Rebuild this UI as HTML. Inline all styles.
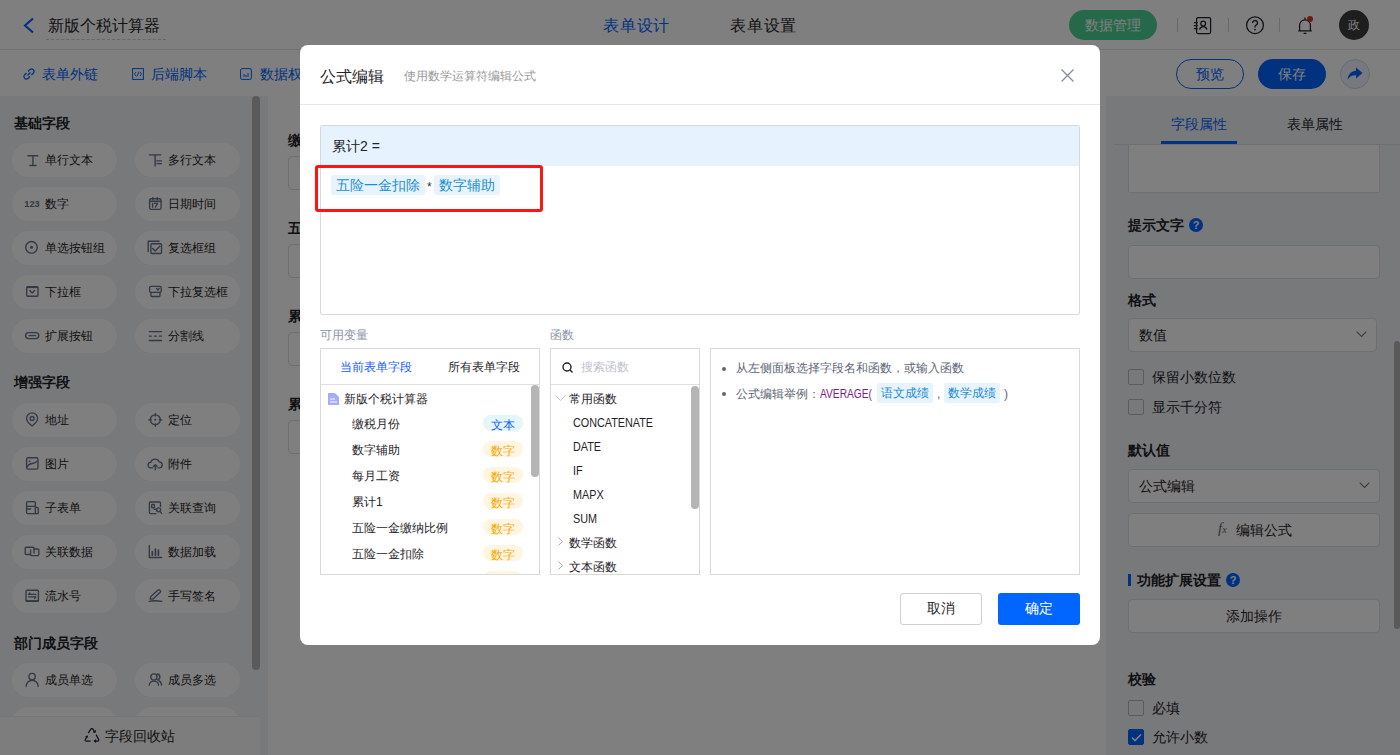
<!DOCTYPE html>
<html><head><meta charset="utf-8">
<style>
*{box-sizing:border-box;margin:0;padding:0}
html,body{width:1400px;height:755px;overflow:hidden;background:#fff;font-family:"Liberation Sans",sans-serif;color:#1f2329}
.a{position:absolute}
.t{position:absolute;white-space:nowrap;line-height:1}
/* header */
#hdr{left:0;top:0;width:1400px;height:50px;background:#fff;border-bottom:1px solid #e6e8eb}
#bar2{left:0;top:50px;width:1400px;height:46px;background:#fff;box-shadow:0 2px 4px rgba(0,0,0,.06)}
#side{left:0;top:96px;width:268px;height:659px;background:#f1f3f7}
#canvas{left:268px;top:96px;width:838px;height:659px;background:#fff}
#rp{left:1106px;top:96px;width:294px;height:659px;background:#f0f2f7}
.pill{position:absolute;width:105px;height:34px;border-radius:17px;background:#fff}
.pill .ic{position:absolute;left:12px;top:9px;width:16px;height:16px;overflow:visible}
.pill .tx{position:absolute;left:33px;top:0;line-height:34px;font-size:12px;color:#1f2329;white-space:nowrap}
.sh{position:absolute;left:14px;font-size:14px;font-weight:bold;color:#1f2329;line-height:1}
.lbl{position:absolute;font-size:14px;font-weight:bold;color:#1f2329;line-height:1}
.inp{position:absolute;border:1px solid #dcdfe6;border-radius:4px;background:#fff}
.cb{position:absolute;width:16px;height:16px;border:1px solid #b4b8c0;border-radius:2px;background:transparent}
#mask{left:0;top:0;width:1400px;height:755px;background:rgba(0,0,0,.5)}
/* modal */
#modal{left:300px;top:45px;width:800px;height:600px;background:#fff;border-radius:8px;overflow:hidden}
.mb{position:absolute;border:1px solid #d9d9d9;background:#fff}
.tag{position:absolute;height:20px;border-radius:2px;background:#e8f4fd;color:#1890d0;font-size:14px;line-height:20px;white-space:nowrap}
.badge{position:absolute;left:162px;width:40px;height:16px;border-radius:8px;font-size:12px;line-height:20px;text-align:center}
.vrow{position:absolute;left:31px;font-size:12px;color:#1f2329;line-height:1;white-space:nowrap}
.lat{transform:scaleX(.9);transform-origin:0 0;color:#333}
.frow{position:absolute;left:22px;font-size:12px;color:#1f2329;line-height:1;white-space:nowrap}
</style></head>
<body>
<div id="bg">
  <div id="hdr" class="a">
    <svg class="a" style="left:22px;top:17px" width="13" height="17" viewBox="0 0 13 17"><path d="M11 1.5L3 8.5L11 15.5" stroke="#0064ff" stroke-width="2.1" fill="none"/></svg>
    <div class="t" style="left:48px;top:18px;font-size:16px;color:#1f2329">新版个税计算器</div>
    <div class="a" style="left:46px;top:39px;width:120px;height:0;border-top:1px dashed #c8ccd2"></div>
    <div class="t" style="left:603px;top:18px;font-size:16px;letter-spacing:.8px;color:#0064ff">表单设计</div>
    <div class="t" style="left:730px;top:18px;font-size:16px;letter-spacing:.8px;color:#1f2329">表单设置</div>
    <div class="a" style="left:1069px;top:10px;width:88px;height:30px;border-radius:15px;background:#4cd294;color:#fff;font-size:14px;line-height:30px;text-align:center">数据管理</div>
    <div class="a" style="left:1177px;top:18px;width:1px;height:14px;background:#d0d3d8"></div>
    <svg class="a" style="left:1193px;top:16px" width="19" height="19" viewBox="0 0 19 19"><rect x="3.6" y="1.6" width="14" height="16" rx="1.5" stroke="#1f2329" stroke-width="1.25" fill="none"/><circle cx="10.2" cy="7.6" r="2.4" stroke="#1f2329" stroke-width="1.25" fill="none"/><path d="M6.6 13.6A3.7 3.7 0 0 1 13.9 13.6M0.9 6.5H4.6M0.9 9.5H4.6M0.9 12.5H4.6" stroke="#1f2329" stroke-width="1.25" fill="none"/></svg>
    <div class="a" style="left:1228px;top:18px;width:1px;height:14px;background:#d0d3d8"></div>
    <svg class="a" style="left:1245px;top:15px" width="20" height="20" viewBox="0 0 20 20"><circle cx="10" cy="10.2" r="8.4" stroke="#1f2329" stroke-width="1.25" fill="none"/><path d="M7.6 8A2.45 2.45 0 1 1 10.8 10.3C10.2 10.6 10 11 10 11.8V12.6" stroke="#1f2329" stroke-width="1.3" fill="none"/><circle cx="10" cy="14.6" r="0.85" fill="#1f2329"/></svg>
    <div class="a" style="left:1279px;top:18px;width:1px;height:14px;background:#d0d3d8"></div>
    <svg class="a" style="left:1296px;top:15px" width="20" height="20" viewBox="0 0 20 20"><path d="M3.6 15.8V10.2A5.4 5.4 0 0 1 14.4 10.2V15.8M2.2 15.9H15.8M7.6 18.4H10.4M9 2.4V4.6" stroke="#1f2329" stroke-width="1.25" fill="none"/><circle cx="14" cy="4" r="3" fill="#e0302a"/></svg>
    <div class="a" style="left:1339px;top:10px;width:30px;height:30px;border-radius:15px;background:#3c3c3c;color:#fff;font-size:12px;line-height:30px;text-align:center">政</div>
  </div>
  <div id="bar2" class="a">
    <svg class="a" style="left:23px;top:18px" width="12" height="12" viewBox="0 0 12 12"><path d="M5 3.5L7 1.5A2.5 2.5 0 0 1 10.5 5L8.5 7M7 8.5L5 10.5A2.5 2.5 0 0 1 1.5 7L3.5 5M4.5 7.5L7.5 4.5" stroke="#0064ff" stroke-width="1.2" fill="none"/></svg>
    <div class="t" style="left:42px;top:17px;font-size:14px;color:#0064ff">表单外链</div>
    <svg class="a" style="left:132px;top:18px" width="12" height="12" viewBox="0 0 12 12"><rect x="0.6" y="0.6" width="10.8" height="10.8" stroke="#0064ff" stroke-width="1" fill="none"/><path d="M4 4L2.5 6L4 8M8 4L9.5 6L8 8M7 3.5L5 8.5" stroke="#0064ff" stroke-width="0.9" fill="none"/></svg>
    <div class="t" style="left:151px;top:17px;font-size:14px;color:#0064ff">后端脚本</div>
    <svg class="a" style="left:240px;top:18px" width="12" height="12" viewBox="0 0 12 12"><rect x="0.6" y="0.6" width="10.8" height="10.8" rx="1.5" stroke="#0064ff" stroke-width="1" fill="none"/><path d="M4 6V9M6 7V9M8 5V9" stroke="#0064ff" stroke-width="1"/></svg>
    <div class="t" style="left:260px;top:17px;font-size:14px;color:#0064ff">数据权限</div>
    <div class="a" style="left:1176px;top:9px;width:68px;height:30px;border-radius:15px;border:1px solid #0064ff;color:#0064ff;font-size:14px;line-height:28px;text-align:center">预览</div>
    <div class="a" style="left:1258px;top:9px;width:68px;height:30px;border-radius:15px;background:#0064ff;color:#fff;font-size:14px;line-height:30px;text-align:center">保存</div>
    <div class="a" style="left:1340px;top:9px;width:30px;height:30px;border-radius:15px;background:#eef2fc;border:1px solid #c9d6f2"></div>
    <svg class="a" style="left:1347px;top:17px" width="16" height="14" viewBox="0 0 16 14"><path d="M9 0.5L15.5 6L9 11.5V8.3C5 8.3 2.5 9.5 0.5 13C1 8 3.5 4.2 9 3.8Z" fill="#0064ff"/></svg>
  </div>
  <div id="side" class="a"></div>
  <div id="canvas" class="a"></div>
  <div id="rp" class="a"></div>
  <div class="sh" style="top:116px">基础字段</div><div class="pill" style="left:12px;top:143px"><svg class="ic" width="16" height="16" viewBox="0 0 16 16"><path d="M3.9 3.7H13.8M5.9 13.5H12.1M8.9 3.7V13.5" stroke="#66728a" stroke-width="1.35" fill="none" stroke-linecap="round" stroke-linejoin="round"/></svg><div class="tx">单行文本</div></div><div class="pill" style="left:135px;top:143px"><svg class="ic" width="16" height="16" viewBox="0 0 16 16"><path d="M2.3 2.8H13.7M8.1 2.8V14M9.8 8.9H14.5M9.8 11.6H14.5" stroke="#66728a" stroke-width="1.35" fill="none" stroke-linecap="round" stroke-linejoin="round"/></svg><div class="tx">多行文本</div></div><div class="pill" style="left:12px;top:187px"><svg class="ic" width="16" height="16" viewBox="0 0 16 16"><text x="0.3" y="10.9" font-size="9.2" font-weight="bold" fill="#66728a" font-family="Liberation Sans">123</text></svg><div class="tx">数字</div></div><div class="pill" style="left:135px;top:187px"><svg class="ic" width="16" height="16" viewBox="0 0 16 16"><rect x="2.6" y="2.7" width="11.5" height="10.6" rx="1.6" stroke="#66728a" stroke-width="1.35" fill="none" stroke-linecap="round" stroke-linejoin="round"/><path d="M2.6 5.3H14.1" stroke="#66728a" stroke-width="1.6"/><path d="M5.8 1.6V3.8M10.3 1.6V3.8M5.6 7.3V11.2M7.4 7.3H10.6L8.4 11.2" stroke="#66728a" stroke-width="1.35" fill="none" stroke-linecap="round" stroke-linejoin="round"/></svg><div class="tx">日期时间</div></div><div class="pill" style="left:12px;top:231px"><svg class="ic" width="16" height="16" viewBox="0 0 16 16"><circle cx="7.5" cy="7.3" r="5.8" stroke="#66728a" stroke-width="1.35" fill="none" stroke-linecap="round" stroke-linejoin="round"/><circle cx="7.5" cy="7.3" r="1.5" fill="#66728a"/></svg><div class="tx">单选按钮组</div></div><div class="pill" style="left:135px;top:231px"><svg class="ic" width="16" height="16" viewBox="0 0 16 16"><path d="M1.2 11.6V1.2H12.1" stroke="#66728a" stroke-width="1.35" fill="none" stroke-linecap="round" stroke-linejoin="round"/><rect x="3.9" y="3.7" width="10.6" height="9.8" rx="1" stroke="#66728a" stroke-width="1.35" fill="none" stroke-linecap="round" stroke-linejoin="round"/><path d="M5.6 8.4L8.2 11L12.8 6.2" stroke="#66728a" stroke-width="1.35" fill="none" stroke-linecap="round" stroke-linejoin="round"/></svg><div class="tx">复选框组</div></div><div class="pill" style="left:12px;top:275px"><svg class="ic" width="16" height="16" viewBox="0 0 16 16"><rect x="2.7" y="2.7" width="11.3" height="9.5" rx="1" stroke="#66728a" stroke-width="1.35" fill="none" stroke-linecap="round" stroke-linejoin="round"/><path d="M2.7 3.2H14" stroke="#66728a" stroke-width="1.8"/><path d="M5.8 6.5L8.2 9L10.6 6.5" stroke="#66728a" stroke-width="1.35" fill="none" stroke-linecap="round" stroke-linejoin="round"/></svg><div class="tx">下拉框</div></div><div class="pill" style="left:135px;top:275px"><svg class="ic" width="16" height="16" viewBox="0 0 16 16"><rect x="2.6" y="2.4" width="11.6" height="5.9" rx="1.4" stroke="#66728a" stroke-width="1.35" fill="none" stroke-linecap="round" stroke-linejoin="round"/><path d="M3.9 8.3V11.5A1 1 0 0 0 4.9 12.5H12A1 1 0 0 0 13 11.5V8.3" stroke="#66728a" stroke-width="1.35" fill="none" stroke-linecap="round" stroke-linejoin="round"/><path d="M9.6 4.4L10.9 6L12.2 4.4" stroke="#66728a" stroke-width="1.35" fill="none" stroke-linecap="round" stroke-linejoin="round"/></svg><div class="tx">下拉复选框</div></div><div class="pill" style="left:12px;top:319px"><svg class="ic" width="16" height="16" viewBox="0 0 16 16"><rect x="1.6" y="4.6" width="13.2" height="6" rx="3" stroke="#66728a" stroke-width="1.35" fill="none" stroke-linecap="round" stroke-linejoin="round"/><path d="M5 7.6H11.6" stroke="#66728a" stroke-width="1.35" fill="none" stroke-linecap="round" stroke-linejoin="round"/></svg><div class="tx">扩展按钮</div></div><div class="pill" style="left:135px;top:319px"><svg class="ic" width="16" height="16" viewBox="0 0 16 16"><path d="M2.3 3.6H14.5M2.3 12.5H14.5" stroke="#66728a" stroke-width="1.35" fill="none" stroke-linecap="round" stroke-linejoin="round"/><path d="M2.3 8.1H4.4M7.3 8.1H9.4M12.3 8.1H14.5" stroke="#66728a" stroke-width="1.35" fill="none" stroke-linecap="round" stroke-linejoin="round"/></svg><div class="tx">分割线</div></div><div class="sh" style="top:375px">增强字段</div><div class="pill" style="left:12px;top:403px"><svg class="ic" width="16" height="16" viewBox="0 0 16 16"><path d="M8.1 14.1C8.1 14.1 2.6 9.6 2.6 6.4A5.5 5.5 0 0 1 13.6 6.4C13.6 9.6 8.1 14.1 8.1 14.1Z" stroke="#66728a" stroke-width="1.35" fill="none" stroke-linecap="round" stroke-linejoin="round"/><circle cx="8.1" cy="6.4" r="1.9" stroke="#66728a" stroke-width="1.35" fill="none" stroke-linecap="round" stroke-linejoin="round"/></svg><div class="tx">地址</div></div><div class="pill" style="left:135px;top:403px"><svg class="ic" width="16" height="16" viewBox="0 0 16 16"><circle cx="8.3" cy="7.8" r="5" stroke="#66728a" stroke-width="1.35" fill="none" stroke-linecap="round" stroke-linejoin="round"/><circle cx="8.3" cy="7.8" r="1" fill="#66728a"/><path d="M8.3 1.3V4M8.3 11.6V14.3M1.8 7.8H4.5M12.1 7.8H14.8" stroke="#66728a" stroke-width="1.35" fill="none" stroke-linecap="round" stroke-linejoin="round"/></svg><div class="tx">定位</div></div><div class="pill" style="left:12px;top:447px"><svg class="ic" width="16" height="16" viewBox="0 0 16 16"><rect x="2.6" y="1.7" width="11.4" height="11.4" rx="1.6" stroke="#66728a" stroke-width="1.35" fill="none" stroke-linecap="round" stroke-linejoin="round"/><circle cx="5.6" cy="5.2" r="0.9" fill="#66728a"/><path d="M3.4 10.6C4.6 7.8 6 7.6 8.3 7.5C10.4 7.4 11.6 6.6 13 5.3" stroke="#66728a" stroke-width="1.35" fill="none" stroke-linecap="round" stroke-linejoin="round"/></svg><div class="tx">图片</div></div><div class="pill" style="left:135px;top:447px"><svg class="ic" width="16" height="16" viewBox="0 0 16 16"><path d="M5.6 11.9H4A2.8 2.8 0 0 1 3.7 6.3A4.6 4.6 0 0 1 12.3 5.9A3 3 0 0 1 12.1 11.9H11" stroke="#66728a" stroke-width="1.35" fill="none" stroke-linecap="round" stroke-linejoin="round"/><path d="M8.3 13.7V8.8M6.5 10.5L8.3 8.6L10.1 10.5" stroke="#66728a" stroke-width="1.35" fill="none" stroke-linecap="round" stroke-linejoin="round"/></svg><div class="tx">附件</div></div><div class="pill" style="left:12px;top:491px"><svg class="ic" width="16" height="16" viewBox="0 0 16 16"><path d="M11.3 6.6V2.6A1 1 0 0 0 10.3 1.6H3.6A1 1 0 0 0 2.6 2.6V12.6A1 1 0 0 0 3.6 13.6H14.2V8.3A1 1 0 0 0 13.2 7.3H11.3V13.6M2.6 6.3H11.3M3.8 9H6.6" stroke="#66728a" stroke-width="1.35" fill="none" stroke-linecap="round" stroke-linejoin="round"/></svg><div class="tx">子表单</div></div><div class="pill" style="left:135px;top:491px"><svg class="ic" width="16" height="16" viewBox="0 0 16 16"><path d="M13.5 6.6V3A1 1 0 0 0 12.5 2H3.4A1 1 0 0 0 2.4 3V12.6A1 1 0 0 0 3.4 13.6H9" stroke="#66728a" stroke-width="1.35" fill="none" stroke-linecap="round" stroke-linejoin="round"/><rect x="4.6" y="4.5" width="2.8" height="3.2" rx="0.8" stroke="#66728a" stroke-width="1.35" fill="none" stroke-linecap="round" stroke-linejoin="round"/><circle cx="11.6" cy="9.8" r="2" stroke="#66728a" stroke-width="1.35" fill="none" stroke-linecap="round" stroke-linejoin="round"/><path d="M7.4 9.2H9.6M13 11.3L14.6 13.3" stroke="#66728a" stroke-width="1.35" fill="none" stroke-linecap="round" stroke-linejoin="round"/></svg><div class="tx">关联查询</div></div><div class="pill" style="left:12px;top:535px"><svg class="ic" width="16" height="16" viewBox="0 0 16 16"><path d="M6.3 10.5H2.2A1 1 0 0 1 1.2 9.5V4.2A1 1 0 0 1 2.2 3.2H9A1 1 0 0 1 10 4.2V9" stroke="#66728a" stroke-width="1.35" fill="none" stroke-linecap="round" stroke-linejoin="round"/><path d="M6.6 5.9V10.6A1 1 0 0 0 7.6 11.6H13.8A1 1 0 0 0 14.8 10.6V6A1 1 0 0 0 13.8 5H10" stroke="#66728a" stroke-width="1.35" fill="none" stroke-linecap="round" stroke-linejoin="round"/></svg><div class="tx">关联数据</div></div><div class="pill" style="left:135px;top:535px"><svg class="ic" width="16" height="16" viewBox="0 0 16 16"><path d="M2.3 1.5V13.5H14.7" stroke="#66728a" stroke-width="1.35" fill="none" stroke-linecap="round" stroke-linejoin="round"/><path d="M5.3 7.6V11.2M8.4 5.2V11.2M11.4 6.1V11.2" stroke="#66728a" stroke-width="1.7" stroke-linecap="round"/></svg><div class="tx">数据加载</div></div><div class="pill" style="left:12px;top:579px"><svg class="ic" width="16" height="16" viewBox="0 0 16 16"><rect x="2" y="2.2" width="12.4" height="11.2" rx="1" stroke="#66728a" stroke-width="1.35" fill="none" stroke-linecap="round" stroke-linejoin="round"/><path d="M2 13H14.4" stroke="#66728a" stroke-width="1.8"/><path d="M4.6 6.4H11.8M5.8 5L4.6 6.4M4.6 8.9H11.8M10.6 10.3L11.8 8.9" stroke="#66728a" stroke-width="1.35" fill="none" stroke-linecap="round" stroke-linejoin="round"/></svg><div class="tx">流水号</div></div><div class="pill" style="left:135px;top:579px"><svg class="ic" width="16" height="16" viewBox="0 0 16 16"><path d="M3.2 11.2L3.6 8.8L11 1.9A1 1 0 0 1 12.5 2L13.3 2.8A1 1 0 0 1 13.3 4.3L6 11.1Z" stroke="#66728a" stroke-width="1.35" fill="none" stroke-linecap="round" stroke-linejoin="round"/><path d="M2.2 13.3C5 12.7 9.5 12.6 14.8 13.3" stroke="#66728a" stroke-width="1.35" fill="none" stroke-linecap="round" stroke-linejoin="round"/></svg><div class="tx">手写签名</div></div><div class="sh" style="top:636px">部门成员字段</div><div class="pill" style="left:12px;top:663px"><svg class="ic" width="16" height="16" viewBox="0 0 16 16"><circle cx="8.1" cy="4.6" r="3.2" stroke="#66728a" stroke-width="1.35" fill="none" stroke-linecap="round" stroke-linejoin="round"/><path d="M2.2 14.2A5.95 5.95 0 0 1 14.1 14.2" stroke="#66728a" stroke-width="1.35" fill="none" stroke-linecap="round" stroke-linejoin="round"/></svg><div class="tx">成员单选</div></div><div class="pill" style="left:135px;top:663px"><svg class="ic" width="16" height="16" viewBox="0 0 16 16"><circle cx="6.9" cy="5" r="3.1" stroke="#66728a" stroke-width="1.35" fill="none" stroke-linecap="round" stroke-linejoin="round"/><path d="M2.2 13A4.8 4.8 0 0 1 11.6 13M10.2 2A3 3 0 0 1 10.6 7.9M11.6 8.6A4.7 4.7 0 0 1 14.5 13" stroke="#66728a" stroke-width="1.35" fill="none" stroke-linecap="round" stroke-linejoin="round"/></svg><div class="tx">成员多选</div></div><div class="pill" style="left:12px;top:707px"><svg class="ic" width="16" height="16" viewBox="0 0 16 16"><circle cx="8.1" cy="4.6" r="3.2" stroke="#66728a" stroke-width="1.35" fill="none" stroke-linecap="round" stroke-linejoin="round"/><path d="M2.2 14.2A5.95 5.95 0 0 1 14.1 14.2" stroke="#66728a" stroke-width="1.35" fill="none" stroke-linecap="round" stroke-linejoin="round"/></svg><div class="tx">成员单选</div></div><div class="pill" style="left:135px;top:707px"><svg class="ic" width="16" height="16" viewBox="0 0 16 16"><circle cx="6.9" cy="5" r="3.1" stroke="#66728a" stroke-width="1.35" fill="none" stroke-linecap="round" stroke-linejoin="round"/><path d="M2.2 13A4.8 4.8 0 0 1 11.6 13M10.2 2A3 3 0 0 1 10.6 7.9M11.6 8.6A4.7 4.7 0 0 1 14.5 13" stroke="#66728a" stroke-width="1.35" fill="none" stroke-linecap="round" stroke-linejoin="round"/></svg><div class="tx">成员多选</div></div><div class="a" style="left:252px;top:96px;width:8px;height:574px;border-radius:4px;background:#b4b4b4"></div><div class="a" style="left:0;top:716px;width:260px;height:39px;background:#fafafb;border-top:1px solid #ebedf0"></div><svg class="a" style="left:84px;top:728px" width="16" height="15" viewBox="0 0 16 15"><path d="M4.2 5.2L7 0.9A1 1 0 0 1 8.7 0.9L10.4 3.6" stroke="#1f2329" stroke-width="1.2" fill="none"/><path d="M9.2 3.9L11 4.2L11.6 2.3" stroke="#1f2329" stroke-width="1.2" fill="none"/><path d="M12.1 6.6L14.7 11.6A1 1 0 0 1 13.8 13.1H10.6M11.9 11.8L10.4 13.1L11.9 14.4" stroke="#1f2329" stroke-width="1.2" fill="none"/><path d="M6.6 13.1H2.2A1 1 0 0 1 1.3 11.6L3 8.2M1.6 8.9L3 8L3.8 9.6" stroke="#1f2329" stroke-width="1.2" fill="none"/></svg><div class="t" style="left:105px;top:729px;font-size:14px;color:#1f2329">字段回收站</div>
  <div class="lbl" style="left:288px;top:133px">缴税月份</div><div class="inp" style="left:288px;top:156px;width:600px;height:34px"></div><div class="lbl" style="left:288px;top:221px">五险一金缴纳比例</div><div class="inp" style="left:288px;top:244px;width:600px;height:34px"></div><div class="lbl" style="left:288px;top:309px">累计1</div><div class="inp" style="left:288px;top:332px;width:600px;height:34px"></div><div class="lbl" style="left:288px;top:397px">累计2</div><div class="inp" style="left:288px;top:420px;width:600px;height:34px"></div>
  <div class="t" style="left:1171px;top:117px;font-size:14px;color:#0064ff">字段属性</div><div class="t" style="left:1287px;top:117px;font-size:14px;color:#1f2329">表单属性</div><div class="a" style="left:1114px;top:144px;width:286px;height:1px;background:#dcdfe6"></div><div class="a" style="left:1161px;top:141px;width:76px;height:3px;background:#0064ff"></div><div class="inp" style="left:1128px;top:121px;width:252px;height:72px;border-radius:2px;clip-path:inset(24px -2px -2px -2px)"></div><div class="lbl" style="left:1128px;top:218px">提示文字</div><div class="a" style="left:1189px;top:218px;width:14px;height:14px;border-radius:7px;background:#0064ff;color:#fff;font-size:11px;font-weight:bold;line-height:14px;text-align:center">?</div><div class="inp" style="left:1128px;top:245px;width:252px;height:34px"></div><div class="lbl" style="left:1128px;top:293px">格式</div><div class="inp" style="left:1128px;top:318px;width:249px;height:34px"></div><div class="t" style="left:1139px;top:328px;font-size:14px;color:#1f2329">数值</div><svg class="a" style="left:1356px;top:331px" width="11" height="7" viewBox="0 0 11 7"><path d="M0.7 0.7L5.5 5.5L10.3 0.7" stroke="#737a86" stroke-width="1.15" fill="none"/></svg><div class="cb" style="left:1128px;top:369px"></div><div class="t" style="left:1152px;top:370px;font-size:14px;color:#1f2329">保留小数位数</div><div class="cb" style="left:1128px;top:399px"></div><div class="t" style="left:1152px;top:400px;font-size:14px;color:#1f2329">显示千分符</div><div class="lbl" style="left:1128px;top:443px">默认值</div><div class="inp" style="left:1128px;top:469px;width:252px;height:34px"></div><div class="t" style="left:1139px;top:479px;font-size:14px;color:#1f2329">公式编辑</div><svg class="a" style="left:1359px;top:482px" width="11" height="7" viewBox="0 0 11 7"><path d="M0.7 0.7L5.5 5.5L10.3 0.7" stroke="#737a86" stroke-width="1.15" fill="none"/></svg><div class="inp" style="left:1128px;top:513px;width:252px;height:34px"></div><div class="t" style="left:1218px;top:521px;font-size:15px;font-style:italic;font-family:'Liberation Serif',serif;color:#5e6675">f<span style="font-size:10px">x</span></div><div class="t" style="left:1236px;top:523px;font-size:14px;color:#1f2329">编辑公式</div><div class="a" style="left:1128px;top:574px;width:3px;height:12px;background:#0064ff"></div><div class="lbl" style="left:1137px;top:573px">功能扩展设置</div><div class="a" style="left:1226px;top:573px;width:14px;height:14px;border-radius:7px;background:#0064ff;color:#fff;font-size:11px;font-weight:bold;line-height:14px;text-align:center">?</div><div class="inp" style="left:1128px;top:599px;width:252px;height:34px"></div><div class="t" style="left:1226px;top:609px;font-size:14px;color:#1f2329">添加操作</div><div class="lbl" style="left:1128px;top:672px">校验</div><div class="cb" style="left:1128px;top:700px"></div><div class="t" style="left:1152px;top:701px;font-size:14px;color:#1f2329">必填</div><div class="cb" style="left:1128px;top:729px;background:#0064ff;border-color:#0064ff"><svg class="a" style="left:2px;top:3px" width="11" height="9" viewBox="0 0 11 9"><path d="M1 4.5L4 7.5L10 1.5" stroke="#fff" stroke-width="1.6" fill="none"/></svg></div><div class="t" style="left:1152px;top:730px;font-size:14px;color:#1f2329">允许小数</div><div class="a" style="left:1394px;top:341px;width:6px;height:288px;border-radius:3px;background:#b4b4b4"></div>
</div>
<div id="mask" class="a"></div>
<div id="modal" class="a">
  <div class="t" style="left:20px;top:24px;font-size:16px;color:#1f2329">公式编辑</div>
  <div class="t" style="left:104px;top:25px;font-size:12px;color:#999">使用数学运算符编辑公式</div>
  <div class="a" style="left:0;top:59px;width:800px;height:1px;background:#e8e8e8"></div>
  <div class="a" style="left:761px;top:23px;width:13px;height:13px">
    <svg width="13" height="13" viewBox="0 0 13 13"><path d="M0.5 0.5L12.5 12.5M12.5 0.5L0.5 12.5" stroke="#808a99" stroke-width="1.2"/></svg>
  </div>
  <!-- formula box -->
  <div class="mb" style="left:20px;top:80px;width:760px;height:190px;border-radius:2px;border-color:#d9d9d9">
    <div class="a" style="left:0;top:0;width:758px;height:40px;background:#e6f2fd"></div>
    <div class="t" style="left:11px;top:13px;font-size:14px;color:#1f2329">累计2 =</div>
    <div class="tag" style="left:10px;top:49px;width:94px;padding-left:5px">五险一金扣除</div>
    <div class="t" style="left:106px;top:55px;font-size:12px;color:#333">*</div>
    <div class="tag" style="left:113px;top:49px;width:66px;padding-left:5px">数字辅助</div>
  </div>
  <div class="a" style="left:15px;top:120px;width:228px;height:47px;border:3px solid #ff1414;border-radius:3px"></div>
  <!-- labels -->
  <div class="t" style="left:20px;top:284px;font-size:12px;color:#8a94a6">可用变量</div>
  <div class="t" style="left:250px;top:284px;font-size:12px;color:#8a94a6">函数</div>
  <!-- vars panel -->
  <div class="mb" style="left:20px;top:303px;width:220px;height:227px;overflow:hidden">
    <div class="t" style="left:19px;top:12px;font-size:12px;color:#1a5cff">当前表单字段</div>
    <div class="t" style="left:127px;top:12px;font-size:12px;color:#1f2329">所有表单字段</div>
    <div class="a" style="left:0;top:35px;width:218px;height:1px;background:#e0e0e0"></div>
    <div class="a" style="left:210px;top:36px;width:8px;height:92px;border-radius:4px;background:#b5b5b5"></div>
    <svg class="a" style="left:7px;top:44px" width="11" height="12" viewBox="0 0 11 12"><path d="M0 0H7L11 4V12H0Z" fill="#a3acff"/><path d="M2 6H7M2 9H9" stroke="#fff" stroke-width="1"/></svg>
    <div class="vrow" style="left:23px;top:44px">新版个税计算器</div>
    <div class="vrow" style="top:69px">缴税月份</div><div class="badge" style="top:66px;background:#e3f6f8;color:#1a5cff">文本</div><div class="vrow" style="top:95px">数字辅助</div><div class="badge" style="top:92px;background:#fff5e0;color:#f7a800">数字</div><div class="vrow" style="top:121px">每月工资</div><div class="badge" style="top:118px;background:#fff5e0;color:#f7a800">数字</div><div class="vrow" style="top:147px">累计1</div><div class="badge" style="top:144px;background:#fff5e0;color:#f7a800">数字</div><div class="vrow" style="top:173px">五险一金缴纳比例</div><div class="badge" style="top:170px;background:#fff5e0;color:#f7a800">数字</div><div class="vrow" style="top:199px">五险一金扣除</div><div class="badge" style="top:196px;background:#fff5e0;color:#f7a800">数字</div><div class="vrow" style="top:225px">累计2</div><div class="badge" style="top:222px;background:#fff5e0;color:#f7a800">数字</div>
  </div>
  <!-- funcs panel -->
  <div class="mb" style="left:250px;top:303px;width:150px;height:227px;overflow:hidden">
    <svg class="a" style="left:11px;top:13px" width="11" height="11" viewBox="0 0 11 11"><circle cx="5" cy="5" r="4" fill="none" stroke="#1f2329" stroke-width="1.4"/><path d="M8 8L10.5 10.5" stroke="#1f2329" stroke-width="1.4"/></svg>
    <div class="t" style="left:30px;top:12px;font-size:12px;color:#c0c4cc">搜索函数</div>
    <div class="a" style="left:0;top:35px;width:148px;height:1px;background:#e0e0e0"></div>
    <div class="a" style="left:140px;top:37px;width:8px;height:123px;border-radius:4px;background:#b5b5b5"></div>
    <svg class="a" style="left:4px;top:46px" width="11" height="7" viewBox="0 0 11 7"><path d="M0.5 0.5L5.5 5.5L10.5 0.5" fill="none" stroke="#c0c4cc" stroke-width="1"/></svg>
    <div class="frow" style="left:18px;top:44px">常用函数</div>
    <div class="frow lat" style="top:68px">CONCATENATE</div><div class="frow lat" style="top:92px">DATE</div><div class="frow lat" style="top:116px">IF</div><div class="frow lat" style="top:140px">MAPX</div><div class="frow lat" style="top:164px">SUM</div><svg class="a" style="left:7px;top:188px" width="5" height="9" viewBox="0 0 5 9"><path d="M0.5 0.5L4.5 4.5L0.5 8.5" fill="none" stroke="#a8adb5" stroke-width="1"/></svg><div class="frow" style="left:18px;top:188px">数学函数</div><svg class="a" style="left:7px;top:212px" width="5" height="9" viewBox="0 0 5 9"><path d="M0.5 0.5L4.5 4.5L0.5 8.5" fill="none" stroke="#a8adb5" stroke-width="1"/></svg><div class="frow" style="left:18px;top:212px">文本函数</div>
  </div>
  <!-- desc panel -->
  <div class="mb" style="left:410px;top:303px;width:370px;height:227px">
    <div class="a" style="left:11px;top:18px;width:4px;height:4px;border-radius:2px;background:#5e6675"></div>
    <div class="t" style="left:25px;top:13px;font-size:12px;color:#5e6675">从左侧面板选择字段名和函数，或输入函数</div>
    <div class="a" style="left:11px;top:43px;width:4px;height:4px;border-radius:2px;background:#5e6675"></div>
    <div class="t" style="left:25px;top:39px;font-size:12px;color:#5e6675">公式编辑举例：<span style="color:#7a1e8c;display:inline-block;transform:scaleX(.85);transform-origin:0 0">AVERAGE(</span></div>
    <div class="tag" style="left:166px;top:34px;width:56px;font-size:12px;padding-left:4px;color:#1a8ad4">语文成绩</div>
    <div class="t" style="left:226px;top:39px;font-size:12px;color:#5e6675">,</div>
    <div class="tag" style="left:233px;top:34px;width:56px;font-size:12px;padding-left:4px;color:#1a8ad4">数学成绩</div>
    <div class="t" style="left:293px;top:39px;font-size:12px;color:#5e6675">)</div>
  </div>
  <!-- buttons -->
  <div class="a" style="left:600px;top:548px;width:82px;height:32px;border:1px solid #d0d0d0;border-radius:3px;font-size:14px;line-height:29px;text-align:center;color:#1f2329">取消</div>
  <div class="a" style="left:698px;top:548px;width:82px;height:32px;border-radius:3px;background:#0066ff;font-size:14px;line-height:31px;text-align:center;color:#fff">确定</div>
</div>
</body></html>
